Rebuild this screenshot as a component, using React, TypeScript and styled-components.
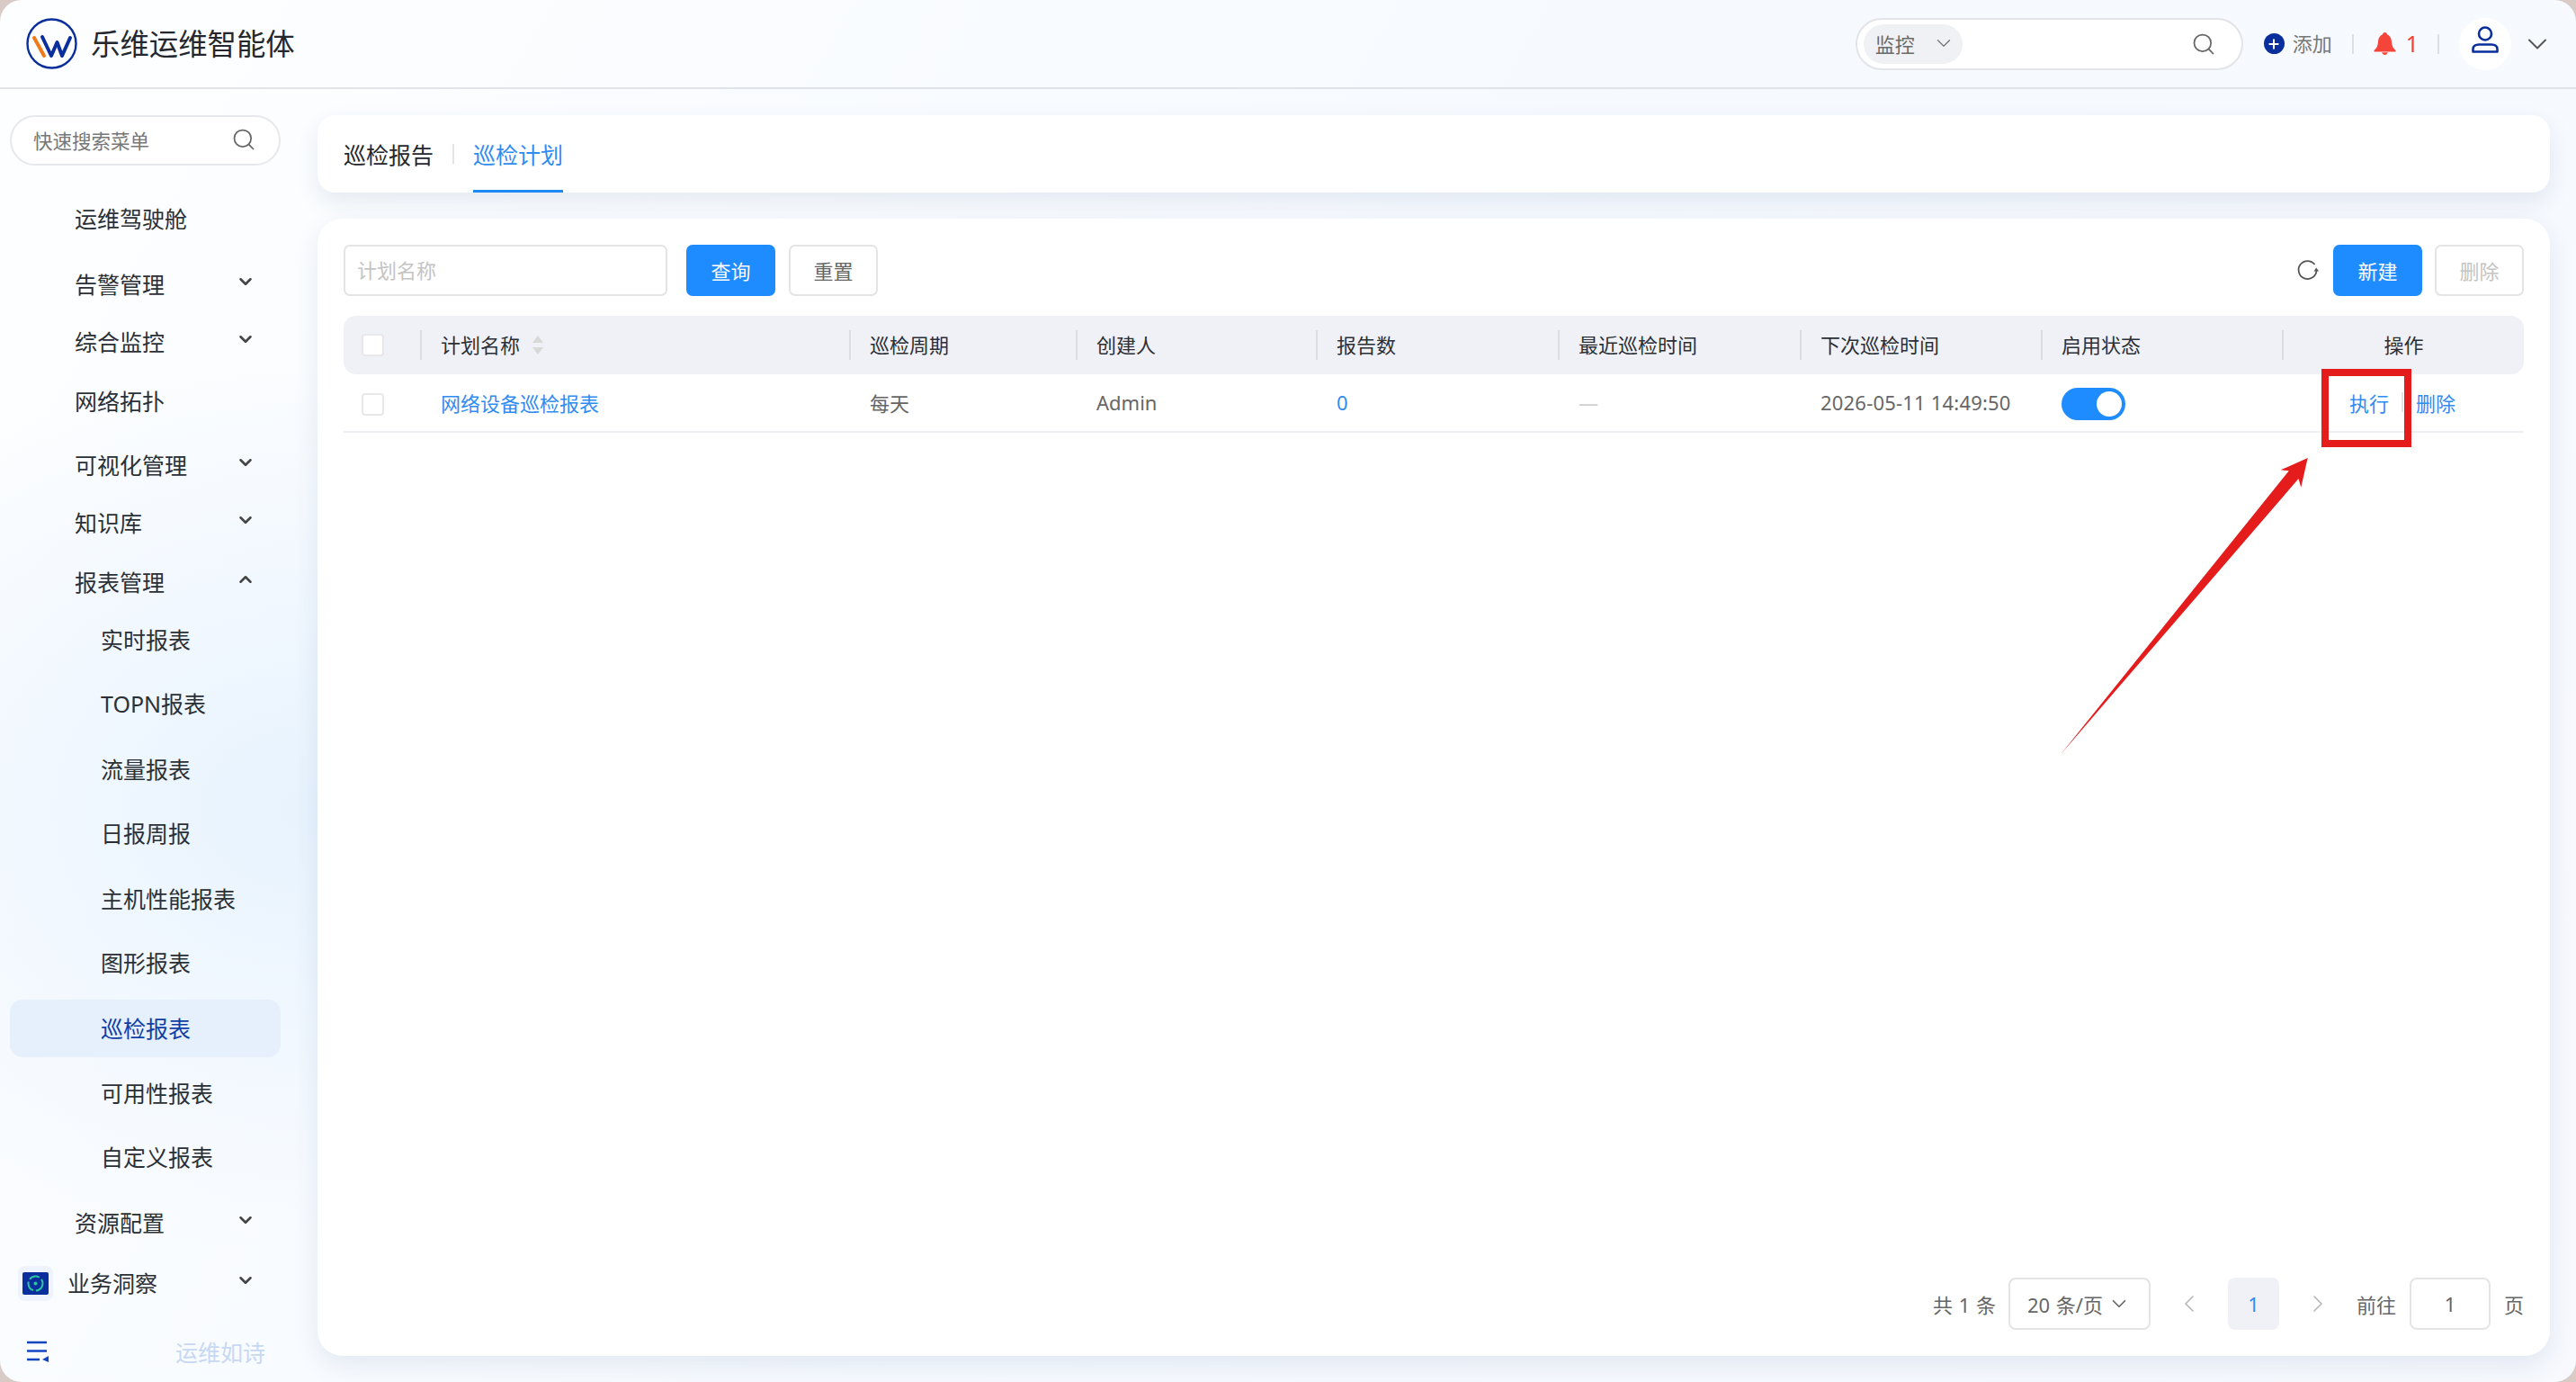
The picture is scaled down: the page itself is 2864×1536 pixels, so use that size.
// npm
import React from 'react';
import styled, { createGlobalStyle } from 'styled-components';
import { Search, ChevronDown, ChevronUp, ChevronLeft, ChevronRight, Plus } from 'lucide-react';

// data
const menu = [
	{ label: '运维驾驶舱', gap: 0 },
	{ label: '告警管理', gap: 9, arrow: 'down' },
	{ label: '综合监控', gap: 0, arrow: 'down' },
	{ label: '网络拓扑', gap: 2 },
	{ label: '可视化管理', gap: 7, arrow: 'down' },
	{ label: '知识库', gap: 0, arrow: 'down' },
	{ label: '报表管理', gap: 2, arrow: 'up' },
	{ label: '实时报表', gap: 0, sub: true },
	{ label: 'TOPN报表', gap: 7, sub: true },
	{ label: '流量报表', gap: 9, sub: true },
	{ label: '日报周报', gap: 7, sub: true },
	{ label: '主机性能报表', gap: 9, sub: true },
	{ label: '图形报表', gap: 7, sub: true },
	{ label: '巡检报表', gap: 9, sub: true, active: true },
	{ label: '可用性报表', gap: 8, sub: true },
	{ label: '自定义报表', gap: 7, sub: true },
	{ label: '资源配置', gap: 9, arrow: 'down' },
];

const headCols = ['巡检周期', '创建人', '报告数', '最近巡检时间', '下次巡检时间', '启用状态'];

const COLS = '85px 477px 252px 267px 269px 269px 268px 268px 269px';

// styles
const GlobalStyle = createGlobalStyle`
	html, body {
		margin: 0;
		padding: 0;
		background: #d8cbc6;
	}

	* {
		box-sizing: border-box;
	}

	body {
		font-family: 'Noto Sans', 'Noto Sans CJK SC', sans-serif;
		color: #2b3036;
	}
`;

const Window = styled.div`
	position: relative;
	width: 2864px;
	height: 1536px;
	overflow: hidden;
	border-radius: 24px;
	background:
		radial-gradient(900px 700px at 340px 900px, #e8f3fe 0%, rgba(232, 243, 254, 0) 70%),
		linear-gradient(120deg, #fdfeff 0%, #f6faff 50%, #f7f9fe 100%);
	display: flex;
	flex-flow: column;
`;

const Top = styled.header`
	flex: 0 0 99px;
	display: flex;
	align-items: center;
	padding: 0 25px 0 29px;
	border-bottom: 2px solid #e0e4e9;
`;

const Logo = styled.svg`
	width: 57px;
	height: 57px;
	flex: 0 0 auto;
`;

const Title = styled.div`
	margin-left: 15px;
	font-size: 32.4px;
	line-height: 1;
	color: #24282e;
`;

const TopRight = styled.div`
	margin-left: auto;
	display: flex;
	align-items: center;
`;

const SearchPill = styled.div`
	width: 431px;
	height: 58px;
	padding: 0 28px 0 7px;
	border-radius: 29px;
	border: 2px solid #e2e4e8;
	background: #fff;
	display: flex;
	align-items: center;
	justify-content: space-between;
	color: #666;
`;

const Chip = styled.div`
	width: 110px;
	height: 44px;
	border-radius: 22px;
	background: #f0f1f5;
	padding: 0 8px 2px 13px;
	display: flex;
	align-items: center;
	justify-content: space-between;
	font-size: 22px;
	color: #6b6b6b;
`;

const AddIcon = styled.span`
	width: 23px;
	height: 23px;
	margin-left: 23px;
	border-radius: 50%;
	background: #0a2f9c;
	color: #fff;
	display: flex;
	align-items: center;
	justify-content: center;
`;

const AddText = styled.span`
	margin-left: 9px;
	margin-top: -3px;
	font-size: 22px;
	color: #777;
`;

const VLine = styled.span`
	width: 2px;
	height: 22px;
	margin: 0 22px;
	background: #dcdfe4;
`;

const BellCount = styled.span`
	margin-left: 11px;
	margin-right: -1px;
	font-size: 25px;
	line-height: 1;
	color: #f5403a;
`;

const Avatar = styled.div`
	width: 58px;
	height: 58px;
	padding-bottom: 9px;
	border-radius: 50%;
	background: #fff;
	display: flex;
	align-items: center;
	justify-content: center;
`;

const Caret = styled.span`
	margin-left: 11px;
	display: flex;
	color: #555;
`;

const Body = styled.div`
	flex: 1 1 auto;
	min-height: 0;
	display: flex;
`;

const Side = styled.aside`
	flex: 0 0 353px;
	padding: 29px 41px 0 11px;
	display: flex;
	flex-flow: column;
`;

const SideSearch = styled.div`
	flex: 0 0 56px;
	padding: 0 25px 2px 24px;
	border-radius: 28px;
	border: 2px solid #e6e8ec;
	background: #fff;
	display: flex;
	align-items: center;
	justify-content: space-between;
	font-size: 21.5px;
	color: #777;
`;

const Menu = styled.nav`
	margin-top: 27px;
	display: flex;
	flex-flow: column;
`;

const Row = styled.div<{ $gap?: number; $sub?: boolean; $active?: boolean }>`
	flex: 0 0 64px;
	height: 64px;
	margin-top: ${(p) => p.$gap ?? 0}px;
	padding: 0 28px 0 ${(p) => (p.$sub ? 101 : 72)}px;
	border-radius: 14px;
	background: ${(p) => (p.$active ? '#e6effc' : 'transparent')};
	color: ${(p) => (p.$active ? '#0f3ea6' : '#2b3036')};
	display: flex;
	align-items: center;
	justify-content: space-between;
	font-size: 25px;
	line-height: 1;
`;

const BizRow = styled(Row)`
	padding-left: 9px;
	justify-content: flex-start;
	margin-top: 3px;
`;

const BizIcon = styled.svg`
	width: 39px;
	height: 39px;
	margin-right: 16px;
	flex: 0 0 auto;
`;

const Arrow = styled.span`
	display: flex;
	color: #444;
	transform: translateY(-3px);
`;

const BizArrow = styled(Arrow)`
	margin-left: auto;
`;

const SideFoot = styled.div`
	margin-top: 26px;
	padding-left: 18px;
	display: flex;
	align-items: center;
	font-size: 25px;
	color: #c7d8f3;
`;

const FootText = styled.span`
	margin-left: 141px;
`;

const Main = styled.main`
	flex: 1 1 auto;
	min-width: 0;
	padding: 29px 29px 29px 0;
	display: flex;
	flex-flow: column;
	gap: 29px;
`;

const TabsCard = styled.div`
	flex: 0 0 86px;
	padding: 0 29px;
	border-radius: 20px;
	background: #fff;
	box-shadow: 0 10px 24px rgba(40, 70, 120, 0.1);
	display: flex;
	align-items: stretch;
`;

const Tab = styled.div<{ $active?: boolean }>`
	padding-top: 3px;
	display: flex;
	align-items: center;
	font-size: 25px;
	color: ${(p) => (p.$active ? '#2f8cf0' : '#24282e')};
	border-bottom: 3px solid ${(p) => (p.$active ? '#1e88f5' : 'transparent')};
`;

const TabLine = styled.span`
	align-self: center;
	width: 2px;
	height: 22px;
	margin: 0 21px;
	background: #e2e4e8;
`;

const Card = styled.div`
	flex: 1 1 auto;
	min-height: 0;
	padding: 29px;
	border-radius: 28px;
	background: #fff;
	box-shadow: 0 10px 28px rgba(40, 70, 120, 0.1);
	display: flex;
	flex-flow: column;
`;

const Toolbar = styled.div`
	flex: 0 0 57px;
	display: flex;
	align-items: center;
`;

const PlanInput = styled.div`
	width: 360px;
	height: 57px;
	padding: 0 13px 3px;
	border: 2px solid #e4e4e4;
	border-radius: 7px;
	display: flex;
	align-items: center;
	font-size: 22px;
	color: #c4c4c4;
`;

const Btn = styled.button<{ $kind?: 'primary' | 'plain' | 'disabled' }>`
	width: 99px;
	height: 57px;
	padding: 0 0 2px;
	border-radius: 7px;
	font: inherit;
	font-size: 22px;
	border: 2px solid ${(p) => (p.$kind === 'primary' ? '#1e8bff' : '#e4e4e4')};
	background: ${(p) => (p.$kind === 'primary' ? '#1e8bff' : '#fff')};
	color: ${(p) => (p.$kind === 'primary' ? '#fff' : p.$kind === 'disabled' ? '#c4c4c4' : '#666')};
`;

const QueryBtn = styled(Btn)`
	margin-left: 21px;
`;

const ResetBtn = styled(Btn)`
	margin-left: 15px;
`;

const Refresh = styled.svg`
	margin-left: auto;
	margin-right: 16px;
	width: 25px;
	height: 25px;
`;

const DeleteBtn = styled(Btn)`
	margin-left: 14px;
`;

const Head = styled.div`
	margin-top: 22px;
	flex: 0 0 65px;
	border-radius: 14px;
	background: #f0f1f6;
	display: grid;
	grid-template-columns: ${COLS};
	align-items: center;
	font-size: 22px;
	color: #2b3036;
`;

const HeadCell = styled.div<{ $center?: boolean; $first?: boolean }>`
	height: 33px;
	padding-left: ${(p) => (p.$first || p.$center ? 0 : 21)}px;
	padding-bottom: ${(p) => (p.$first ? 0 : 4)}px;
	border-left: 2px solid ${(p) => (p.$first ? 'transparent' : '#dcdde2')};
	display: flex;
	align-items: center;
	justify-content: ${(p) => (p.$center ? 'center' : 'flex-start')};
`;

const Sort = styled.span`
	margin-left: 14px;
	margin-top: 4px;
	display: flex;
	flex-flow: column;
	gap: 5px;
`;

const SortUp = styled.i`
	width: 0;
	height: 0;
	border: 6px solid transparent;
	border-top: 0;
	border-bottom: 8px solid #d8d8d8;
`;

const SortDown = styled.i`
	width: 0;
	height: 0;
	border: 6px solid transparent;
	border-bottom: 0;
	border-top: 8px solid #d8d8d8;
`;

const Check = styled.span`
	display: block;
	width: 25px;
	height: 25px;
	margin-left: 20px;
	margin-top: 3px;
	border: 2px solid #e8e8ea;
	border-radius: 4px;
	background: #fff;
`;

const HeadCheck = styled(Check)`
	margin-left: 18px;
	margin-top: 0;
`;

const DataRow = styled.div`
	flex: 0 0 65px;
	border-bottom: 2px solid #eeeff2;
	display: grid;
	grid-template-columns: ${COLS};
	align-items: center;
	font-size: 22px;
	color: #666;
`;

const Cell = styled.div`
	padding-left: 23px;
	padding-bottom: 2px;
	display: flex;
	align-items: center;
`;

const DateCell = styled(Cell)`
	letter-spacing: 0.2px;
`;

const OpsCell = styled(Cell)`
	padding-left: 75px;
`;

const Link = styled.span`
	color: #2f8cf0;
`;

const Dash = styled.span`
	color: #d0d0d0;
`;

const Switch = styled.span`
	width: 71px;
	height: 36px;
	margin-top: 5px;
	padding: 4px;
	border-radius: 18px;
	background: #1e8bff;
	display: flex;
	justify-content: flex-end;
`;

const Knob = styled.span`
	width: 28px;
	height: 28px;
	border-radius: 50%;
	background: #fff;
`;

const OpsLine = styled.span`
	width: 2px;
	height: 22px;
	margin: 0 14px;
	background: #e3e4e8;
`;

const Pager = styled.div`
	margin-top: auto;
	display: flex;
	justify-content: flex-end;
	align-items: center;
	font-size: 22px;
	color: #666;
	word-spacing: 1px;
`;

const Select = styled.div`
	width: 158px;
	height: 58px;
	margin-left: 14px;
	padding: 0 20px 0 19px;
	border: 2px solid #e4e4e4;
	border-radius: 8px;
	display: flex;
	align-items: center;
	justify-content: space-between;
	white-space: nowrap;
`;

const PageNav = styled.span`
	margin: 0 27px;
	display: flex;
	color: #b4b4b4;
`;

const PageNum = styled.span`
	width: 57px;
	height: 58px;
	border-radius: 8px;
	background: #f0f1f6;
	color: #2f8cf0;
	display: flex;
	align-items: center;
	justify-content: center;
`;

const GotoInput = styled.span`
	width: 90px;
	height: 58px;
	margin: 0 15px;
	border: 2px solid #e4e4e4;
	border-radius: 8px;
	display: flex;
	align-items: center;
	justify-content: center;
`;

const RedBox = styled.div`
	position: absolute;
	left: 2581px;
	top: 410px;
	width: 100px;
	height: 87px;
	border: 8px solid #e51c1c;
`;

const RedArrow = styled.svg`
	position: absolute;
	left: 2280px;
	top: 500px;
	width: 300px;
	height: 350px;
`;

// components
export default function App() {
	return (
		<>
			<GlobalStyle />
			<Window>
				<Top>
					<Logo viewBox='0 0 57 57'>
						<circle cx='28.5' cy='28.5' r='27' fill='none' stroke='#0a2f9c' strokeWidth='2.4' />
						<path d='M9 22 L20 42' fill='none' stroke='#f07a1a' strokeWidth='4' strokeLinecap='round' />
						<path d='M18 21 L28 42 L34.5 27 L40 42 L49 22' fill='none' stroke='#0a2f9c' strokeWidth='4' strokeLinecap='round' strokeLinejoin='round' />
					</Logo>
					<Title>乐维运维智能体</Title>

					<TopRight>
						<SearchPill>
							<Chip>
								监控
								<ChevronDown size={26} strokeWidth={1.2} color='#777' />
							</Chip>
							<Search size={28} strokeWidth={1.5} />
						</SearchPill>

						<AddIcon>
							<Plus size={16} strokeWidth={3} />
						</AddIcon>
						<AddText>添加</AddText>
						<VLine />

						<svg width='25' height='25' viewBox='0 0 25 25'>
							<path d='M12.5 0 C14 0 14.8 1 14.9 2.2 C18.2 3.4 19.8 6.8 20 10.5 C20.2 15 22 18 24.5 20 L24.5 21.5 L0.5 21.5 L0.5 20 C3 18 4.8 15 5 10.5 C5.2 6.8 6.8 3.4 10.1 2.2 C10.2 1 11 0 12.5 0 Z M9.2 22.3 L15.8 22.3 C15.4 24 14 25 12.5 25 C11 25 9.6 24 9.2 22.3 Z' fill='#f5453a' />
						</svg>
						<BellCount>1</BellCount>
						<VLine />

						<Avatar>
							<svg width='30' height='30' viewBox='0 0 30 30'>
								<circle cx='15' cy='8.5' r='7' fill='none' stroke='#0a2f9c' strokeWidth='2.6' />
								<path d='M1.5 28.5 L1.5 25.5 C1.5 22.5 4 20.5 8 20.5 L22 20.5 C26 20.5 28.5 22.5 28.5 25.5 L28.5 28.5 Z' fill='none' stroke='#0a2f9c' strokeWidth='2.6' strokeLinejoin='round' />
							</svg>
						</Avatar>
						<Caret>
							<ChevronDown size={36} strokeWidth={1.3} />
						</Caret>
					</TopRight>
				</Top>

				<Body>
					<Side>
						<SideSearch>
							快速搜索菜单
							<Search size={28} strokeWidth={1.5} color='#666' />
						</SideSearch>

						<Menu>
							{menu.map((m) => (
								<Row key={m.label} $gap={m.gap} $sub={m.sub} $active={m.active}>
									{m.label}
									{m.arrow && <Arrow>{m.arrow === 'up' ? <ChevronUp size={22} strokeWidth={2.8} /> : <ChevronDown size={22} strokeWidth={2.8} />}</Arrow>}
								</Row>
							))}

							<BizRow>
								<BizIcon viewBox='0 0 39 39'>
									<rect width='39' height='39' rx='8' fill='#eef3fd' />
									<rect x='5' y='7' width='29' height='25' rx='2' fill='#0a2f9c' />
									<circle cx='19.5' cy='19.5' r='8' fill='none' stroke='#2ec4a0' strokeWidth='2' strokeDasharray='12 3' />
									<circle cx='19.5' cy='19.5' r='2' fill='#2ec4a0' />
								</BizIcon>
								业务洞察
								<BizArrow>
									<ChevronDown size={22} strokeWidth={2.8} />
								</BizArrow>
							</BizRow>
						</Menu>

						<SideFoot>
							<svg width='25' height='24' viewBox='0 0 25 24'>
								<path d='M1 2 H23 M1 11.5 H23 M1 21 H15' stroke='#1246c0' strokeWidth='2.4' fill='none' />
								<path d='M18 21 L25 17 L25 24 Z' fill='#1246c0' />
							</svg>
							<FootText>运维如诗</FootText>
						</SideFoot>
					</Side>

					<Main>
						<TabsCard>
							<Tab>巡检报告</Tab>
							<TabLine />
							<Tab $active>巡检计划</Tab>
						</TabsCard>

						<Card>
							<Toolbar>
								<PlanInput>计划名称</PlanInput>
								<QueryBtn $kind='primary'>查询</QueryBtn>
								<ResetBtn $kind='plain'>重置</ResetBtn>

								<Refresh viewBox='0 0 25 25'>
									<path d='M20.5 6 A10 10 0 1 0 22.5 13' fill='none' stroke='#555' strokeWidth='1.8' />
									<path d='M19.5 13.5 L25 13.5 L22.3 9.5 Z' fill='#555' />
								</Refresh>
								<Btn $kind='primary'>新建</Btn>
								<DeleteBtn $kind='disabled'>删除</DeleteBtn>
							</Toolbar>

							<Head>
								<HeadCell $first>
									<HeadCheck />
								</HeadCell>
								<HeadCell>
									计划名称
									<Sort>
										<SortUp />
										<SortDown />
									</Sort>
								</HeadCell>
								{headCols.map((c) => (
									<HeadCell key={c}>{c}</HeadCell>
								))}
								<HeadCell $center>操作</HeadCell>
							</Head>

							<DataRow>
								<div>
									<Check />
								</div>
								<Cell>
									<Link>网络设备巡检报表</Link>
								</Cell>
								<Cell>每天</Cell>
								<Cell>Admin</Cell>
								<Cell>
									<Link>0</Link>
								</Cell>
								<Cell>
									<Dash>—</Dash>
								</Cell>
								<DateCell>2026-05-11 14:49:50</DateCell>
								<Cell>
									<Switch>
										<Knob />
									</Switch>
								</Cell>
								<OpsCell>
									<Link>执行</Link>
									<OpsLine />
									<Link>删除</Link>
								</OpsCell>
							</DataRow>

							<Pager>
								共 1 条
								<Select>
									20 条/页
									<ChevronDown size={26} strokeWidth={1.6} />
								</Select>
								<PageNav>
									<ChevronLeft size={32} strokeWidth={1.2} />
								</PageNav>
								<PageNum>1</PageNum>
								<PageNav>
									<ChevronRight size={32} strokeWidth={1.2} />
								</PageNav>
								前往
								<GotoInput>1</GotoInput>
								页
							</Pager>
						</Card>
					</Main>
				</Body>

				<RedBox />
				<RedArrow viewBox='0 0 300 350'>
					<path d='M285.7 9 L255.7 22.3 L264.8 23.3 L11 338.5 L275.5 32 L278.3 41.7 Z' fill='#e51c1c' />
				</RedArrow>
			</Window>
		</>
	);
}
